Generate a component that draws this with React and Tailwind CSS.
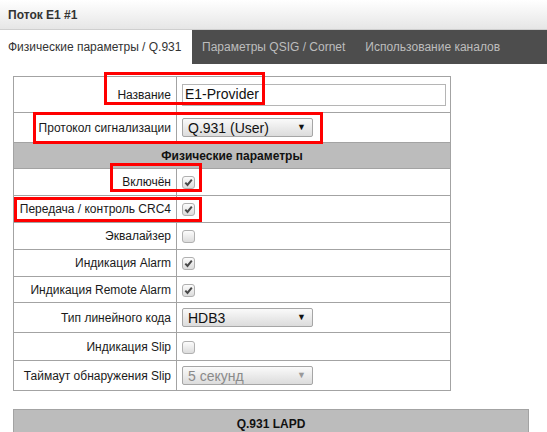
import React from 'react';

const rows = [
  { label: 'Включён', h: 'h-[27px]', type: 'check', checked: true },
  { label: 'Передача / контроль CRC4', h: 'h-[27px]', type: 'check', checked: true },
  { label: 'Эквалайзер', h: 'h-[27px]', type: 'check', checked: false },
  { label: 'Индикация Alarm', h: 'h-[27px]', type: 'check', checked: true },
  { label: 'Индикация Remote Alarm', h: 'h-[26px]', type: 'check', checked: true },
  { label: 'Тип линейного кода', h: 'h-[30px]', type: 'select', value: 'HDB3' },
  { label: 'Индикация Slip', h: 'h-[28px]', type: 'check', checked: false },
  { label: 'Таймаут обнаружения Slip', h: 'h-[30px]', type: 'select', value: '5 секунд', disabled: true },
];

function Check({ checked }) {
  return (
    <span className="inline-flex w-[13px] h-[13px] items-center justify-center rounded-[3px] border border-[#b0b0b0] bg-gradient-to-b from-[#fcfcfc] to-[#dcdcdc] align-middle">
      {checked && (
        <svg width="9" height="9" viewBox="0 0 9 9">
          <path d="M1.3 4.6 L3.5 6.9 L7.8 1.6" fill="none" stroke="#484848" strokeWidth="2" />
        </svg>
      )}
    </span>
  );
}

function Select({ value, disabled }) {
  return (
    <div className={`flex items-center justify-between w-[131px] h-[19px] pl-[5px] pr-[6px] border border-[#a6a6a6] rounded-[2px] bg-gradient-to-b from-[#fafafa] to-[#dcdcdc] text-[14px] leading-none ${disabled ? 'text-[#8a8a8a]' : 'text-[#111]'}`}>
      <span>{value}</span>
      <span className={`text-[9px] ${disabled ? 'text-[#999]' : 'text-[#111]'}`}>▼</span>
    </div>
  );
}

function Label({ children }) {
  return (
    <td className="border border-[#a3a3a3] text-right pr-[5px] text-[12px] text-[#1a1a1a] whitespace-nowrap">
      {children}
    </td>
  );
}

export default function App() {
  return (
    <div className="relative w-[547px] h-[432px] overflow-hidden bg-white font-['Liberation_Sans',Arial,sans-serif]">
      <div className="h-[30px] pl-[8px] flex items-center bg-gradient-to-b from-white to-[#e6e6e6] border-b border-[#cfcfcf] text-[12px] font-bold text-[#333]">
        Поток E1 #1
      </div>
      <div className="flex h-[34px] text-[12px] whitespace-nowrap">
        <div className="w-[192px] pl-[8px] flex items-center text-[#333] bg-white">Физические параметры / Q.931</div>
        <div className="flex-1 flex items-center bg-[#4d4d4d] text-[#bdbdbd]">
          <span className="ml-[10px]">Параметры QSIG / Cornet</span>
          <span className="ml-[20px]">Использование каналов</span>
        </div>
      </div>

      <table className="ml-[13px] mt-[12px] w-[438px] table-fixed border-collapse border border-[#a3a3a3]">
        <colgroup>
          <col className="w-[163px]" />
          <col />
        </colgroup>
        <tbody>
          <tr className="h-[36px]">
            <Label>Название</Label>
            <td className="border border-[#a3a3a3] pl-[5px]">
              <div className="w-[264px] h-[22px] border border-[#b5b5b5] pl-[2px] flex items-center text-[14px] text-[#111]">E1-Provider</div>
            </td>
          </tr>
          <tr className="h-[30px]">
            <Label>Протокол сигнализации</Label>
            <td className="border border-[#a3a3a3] pl-[5px]">
              <Select value="Q.931 (User)" />
            </td>
          </tr>
          <tr className="h-[26px]">
            <td colSpan={2} className="border border-[#a3a3a3] bg-[#bcbcbc] text-center text-[12px] font-bold text-[#111]">
              Физические параметры
            </td>
          </tr>
          {rows.map((r) => (
            <tr key={r.label} className={r.h}>
              <Label>{r.label}</Label>
              <td className="border border-[#a3a3a3] pl-[5px]">
                {r.type === 'check' ? <Check checked={r.checked} /> : <Select value={r.value} disabled={r.disabled} />}
              </td>
            </tr>
          ))}
        </tbody>
      </table>

      <div className="ml-[13px] mt-[18px] w-[516px] h-[40px] border border-[#a3a3a3] bg-[#bcbcbc] flex justify-center pt-[5px] text-[12px] font-bold text-[#111]">
        Q.931 LAPD
      </div>

      {/* red annotation frames */}
      <div className="absolute left-[104px] top-[72px] w-[161px] h-[33px] border-[3px] border-[#ff0000]" />
      <div className="absolute left-[33px] top-[112px] w-[290px] h-[32px] border-[3px] border-[#ff0000]" />
      <div className="absolute left-[110px] top-[163px] w-[92px] h-[29px] border-[3px] border-[#ff0000]" />
      <div className="absolute left-[14px] top-[197px] w-[188px] h-[25px] border-[3px] border-[#ff0000]" />
    </div>
  );
}
